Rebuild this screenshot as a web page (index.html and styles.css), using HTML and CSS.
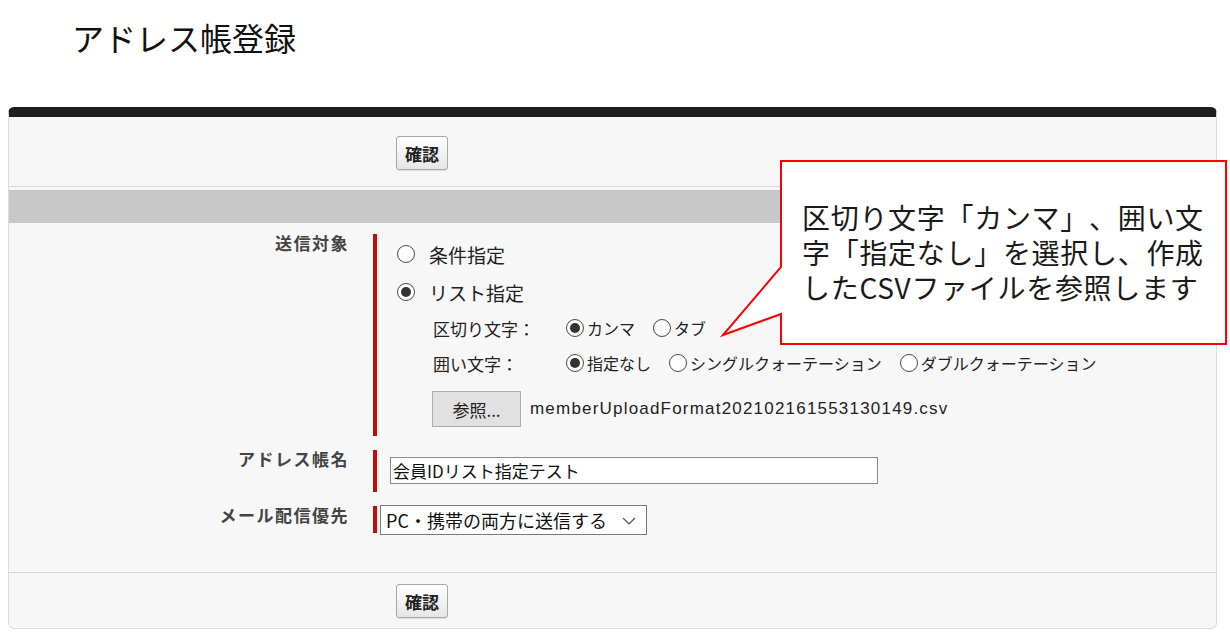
FILE: index.html
```html
<!DOCTYPE html>
<html lang="ja">
<head>
    <meta charset="UTF-8">
    <title>アドレス帳登録</title>
    <link rel="stylesheet" href="styles.css">
</head>
<body>
    <h1 class="page-title">アドレス帳登録</h1>

    <div class="panel">
        <div class="panel-actions">
            <button class="btn-confirm" type="button">確認</button>
        </div>
        <div class="section-bar"></div>

        <div class="form">
            <div class="form-row">
                <div class="form-label">送信対象</div>
                <div class="form-field field-target">
                    <label class="radio-line"><span class="radio"></span>条件指定</label>
                    <label class="radio-line"><span class="radio checked"></span>リスト指定</label>
                    <div class="sub-row">
                        <span class="sub-label">区切り文字：</span>
                        <label class="sub-option"><span class="radio checked"></span>カンマ</label>
                        <label class="sub-option"><span class="radio"></span>タブ</label>
                    </div>
                    <div class="sub-row">
                        <span class="sub-label">囲い文字：</span>
                        <label class="sub-option"><span class="radio checked"></span>指定なし</label>
                        <label class="sub-option"><span class="radio"></span>シングルクォーテーション</label>
                        <label class="sub-option"><span class="radio"></span>ダブルクォーテーション</label>
                    </div>
                    <div class="file-row">
                        <button class="btn-browse" type="button">参照...</button>
                        <span class="file-name">memberUploadFormat202102161553130149.csv</span>
                    </div>
                </div>
            </div>

            <div class="form-row">
                <div class="form-label">アドレス帳名</div>
                <div class="form-field field-name">
                    <input class="text-input" type="text" value="会員IDリスト指定テスト">
                </div>
            </div>

            <div class="form-row">
                <div class="form-label">メール配信優先</div>
                <div class="form-field field-priority">
                    <span class="select-wrap">
                        <select class="select-input">
                            <option>PC・携帯の両方に送信する</option>
                        </select>
                        <svg class="select-arrow" width="14" height="8" viewBox="0 0 14 8">
                            <path d="M1 1 L7 7 L13 1" fill="none" stroke="#555" stroke-width="1.2"/>
                        </svg>
                    </span>
                </div>
            </div>
        </div>

        <div class="panel-actions bottom">
            <button class="btn-confirm" type="button">確認</button>
        </div>
    </div>

    <div class="callout">
        <svg class="callout-shape" width="510" height="200" viewBox="0 0 510 200">
            <path d="M61 11 H506 V194 H61 V164 L3 185 L61 117 Z" fill="#fff" stroke="#f00" stroke-width="2"/>
        </svg>
        <div class="callout-text">区切り文字「カンマ」、囲い文<br>字「指定なし」を選択し、作成<br>したCSVファイルを参照します</div>
    </div>
</body>
</html>
```

FILE: styles.css
```css
body {
    margin: 0;
    background-color: #fff;
    font-family: "Noto Sans CJK JP", sans-serif;
    color: #222;
    text-spacing-trim: space-all;
}

.page-title {
    margin: 17px 0 0 72px;
    font-size: 32px;
    line-height: 40px;
    font-weight: normal;
    color: #111;
}

.panel {
    width: 1209px;
    margin: 50px 0 0 8px;
    box-sizing: border-box;
    background-color: #f7f7f7;
    border: 1px solid #dcdcdc;
    border-top: 10px solid #1e1e1e;
    border-radius: 6px;
}

.panel-actions {
    height: 70px;
    box-sizing: border-box;
    padding: 19px 0 0 387px;
    border-bottom: 1px solid #d8d8d8;
}

.panel-actions.bottom {
    height: 56px;
    padding-top: 11px;
    border-bottom: none;
    border-top: 1px solid #d8d8d8;
}

.btn-confirm {
    width: 52px;
    height: 34px;
    padding: 0;
    font-family: "Noto Sans CJK JP", sans-serif;
    font-size: 17px;
    font-weight: bold;
    color: #222;
    background: linear-gradient(#ffffff, #e6e6e6);
    border: 1px solid #a8a8a8;
    border-radius: 3px;
    box-shadow: 0 1px 1px rgba(0, 0, 0, 0.1);
}

.section-bar {
    height: 33px;
    margin-top: 3px;
    background-color: #c8c8c8;
}

.form {
    padding: 11px 0 39px 0;
}

.form-row {
    display: flex;
    align-items: flex-start;
    margin-bottom: 14px;
}

.form-row:last-child {
    margin-bottom: 0;
}

.form-label {
    width: 340px;
    text-align: right;
    font-size: 17px;
    line-height: 18px;
    font-weight: bold;
    letter-spacing: 1.5px;
    color: #444;
}

.form-field {
    margin-left: 24px;
    border-left: 4px solid #c30d0d;
}

.field-target {
    padding: 6px 0 9px 20px;
}

.radio-line {
    display: flex;
    align-items: center;
    gap: 14px;
    height: 28px;
    margin-bottom: 10px;
    font-size: 19px;
}

.radio-line + .radio-line {
    margin-bottom: 8px;
}

.radio {
    position: relative;
    display: inline-block;
    flex: none;
    width: 16px;
    height: 16px;
    border: 1px solid #4a4a4a;
    border-radius: 50%;
    background-color: #fff;
}

.radio.checked::after {
    content: "";
    position: absolute;
    left: 3px;
    top: 3px;
    width: 10px;
    height: 10px;
    border-radius: 50%;
    background-color: #333;
}

.sub-row {
    display: flex;
    align-items: center;
    height: 28px;
    margin: 0 0 7px 36px;
    font-size: 16px;
}

.sub-label {
    width: 133px;
    font-size: 17px;
}

.sub-option {
    display: flex;
    align-items: center;
    gap: 3px;
    margin-right: 18px;
}

.file-row {
    display: flex;
    align-items: center;
    margin: 14px 0 0 35px;
}

.btn-browse {
    width: 89px;
    height: 36px;
    padding: 0;
    font-family: "Noto Sans CJK JP", sans-serif;
    font-size: 17px;
    color: #222;
    background-color: #e1e1e1;
    border: 1px solid #adadad;
}

.file-name {
    margin-left: 9px;
    font-family: "Liberation Sans", "Noto Sans CJK JP", sans-serif;
    font-size: 17px;
    letter-spacing: 1.2px;
    color: #222;
}

.field-name {
    padding: 7px 0 8px 13px;
}

.text-input {
    display: block;
    width: 488px;
    height: 27px;
    box-sizing: border-box;
    margin: 0;
    padding: 0 2px;
    font-family: "Noto Sans CJK JP", sans-serif;
    font-size: 17px;
    color: #111;
    background-color: #fff;
    border: 1px solid #8a8a8a;
    border-radius: 0;
}

.field-priority {
    height: 27px;
    padding-left: 3px;
}

.select-wrap {
    position: relative;
    display: block;
    width: 267px;
    margin-top: -1px;
}

.select-input {
    display: block;
    width: 267px;
    height: 30px;
    margin: 0;
    padding: 0 0 0 5px;
    font-family: "Noto Sans CJK JP", sans-serif;
    font-size: 18px;
    color: #111;
    background-color: #fff;
    border: 1px solid #7a7a7a;
    border-radius: 0;
    appearance: none;
    -webkit-appearance: none;
}

.select-arrow {
    position: absolute;
    right: 11px;
    top: 12px;
}

.callout {
    position: absolute;
    left: 720px;
    top: 150px;
    width: 510px;
    height: 200px;
}

.callout-shape {
    display: block;
}

.callout-text {
    position: absolute;
    left: 82px;
    top: 50px;
    font-size: 28px;
    line-height: 35px;
    letter-spacing: 0.7px;
    white-space: nowrap;
    color: #1a1a1a;
}
```
